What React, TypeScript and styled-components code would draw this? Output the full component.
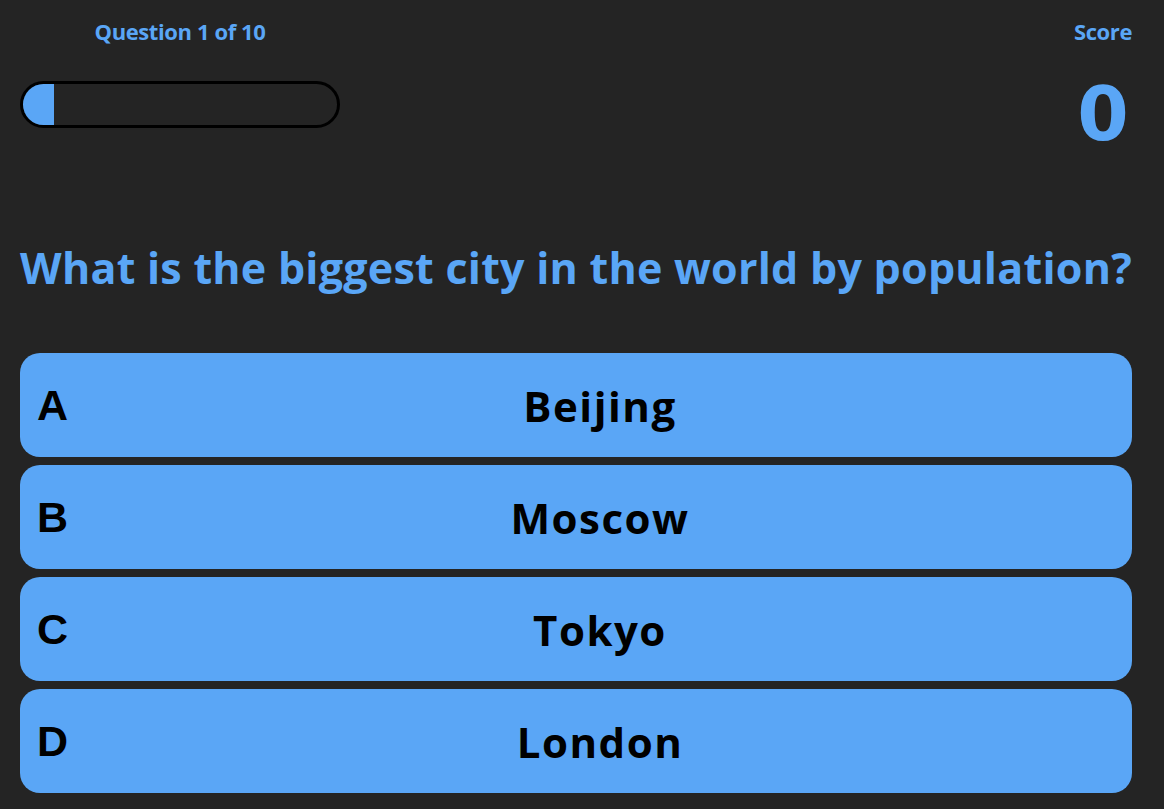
import React from "react";
import styled, { createGlobalStyle } from "styled-components";

const Global = createGlobalStyle`
  html, body { margin: 0; padding: 0; background: #242424; }
  body { font-family: "Open Sans", "Noto Sans", sans-serif; }
`;

const BLUE = "#5aa6f6";

const Page = styled.div`
  width: 1112px;
  padding: 0 20px;
  box-sizing: content-box;
  display: flex;
  flex-direction: column;
`;

const Header = styled.header`
  display: flex;
  justify-content: space-between;
  align-items: flex-start;
  padding-top: 18px;
`;

const Column = styled.div<{ $width?: string }>`
  display: flex;
  flex-direction: column;
  align-items: center;
  width: ${(p) => p.$width ?? "auto"};
`;

const Label = styled.div`
  color: ${BLUE};
  font-weight: 700;
  font-size: 22px;
  line-height: 26px;
  letter-spacing: -0.4px;
`;

const Progress = styled.div`
  margin-top: 37px;
  width: 320px;
  height: 47px;
  box-sizing: border-box;
  border: 3px solid #000;
  border-radius: 24px;
  overflow: hidden;
  background: #242424;
`;

const Fill = styled.div`
  height: 100%;
  background: ${BLUE};
`;

const ScoreValue = styled.div`
  color: ${BLUE};
  font-family: "DejaVu Sans", "Open Sans", sans-serif;
  font-weight: 700;
  font-size: 74px;
  line-height: 84px;
  margin-top: 28px;
`;

const Question = styled.h1`
  margin: 82px 0 0;
  color: ${BLUE};
  font-weight: 700;
  font-size: 43px;
  line-height: 60px;
  text-align: center;
  letter-spacing: 0.25px;
  white-space: nowrap;
`;

const Answers = styled.div`
  margin-top: 55px;
  display: flex;
  flex-direction: column;
  gap: 8px;
`;

const Answer = styled.button`
  display: flex;
  align-items: center;
  height: 104px;
  padding: 0 17px;
  border: none;
  border-radius: 20px;
  background: ${BLUE};
  color: #000;
  cursor: pointer;
`;

const Letter = styled.span`
  width: 48px;
  text-align: left;
  font-family: "Liberation Sans", Arial, sans-serif;
  font-weight: 700;
  font-size: 43px;
`;

const AnswerText = styled.span`
  flex: 1;
  text-align: center;
  font-family: "Open Sans", "Noto Sans", sans-serif;
  font-weight: 700;
  font-size: 42px;
  letter-spacing: 1.5px;
`;

const answers = ["Beijing", "Moscow", "Tokyo", "London"];

export default function App() {
  return (
    <>
      <Global />
      <Page>
        <Header>
          <Column $width="320px">
            <Label>Question 1 of 10</Label>
            <Progress>
              <Fill style={{ width: "10%" }} />
            </Progress>
          </Column>
          <Column>
            <Label>Score</Label>
            <ScoreValue>0</ScoreValue>
          </Column>
        </Header>
        <Question>What is the biggest city in the world by population?</Question>
        <Answers>
          {answers.map((a, i) => (
            <Answer key={a}>
              <Letter>{"ABCD"[i]}</Letter>
              <AnswerText>{a}</AnswerText>
            </Answer>
          ))}
        </Answers>
      </Page>
    </>
  );
}
